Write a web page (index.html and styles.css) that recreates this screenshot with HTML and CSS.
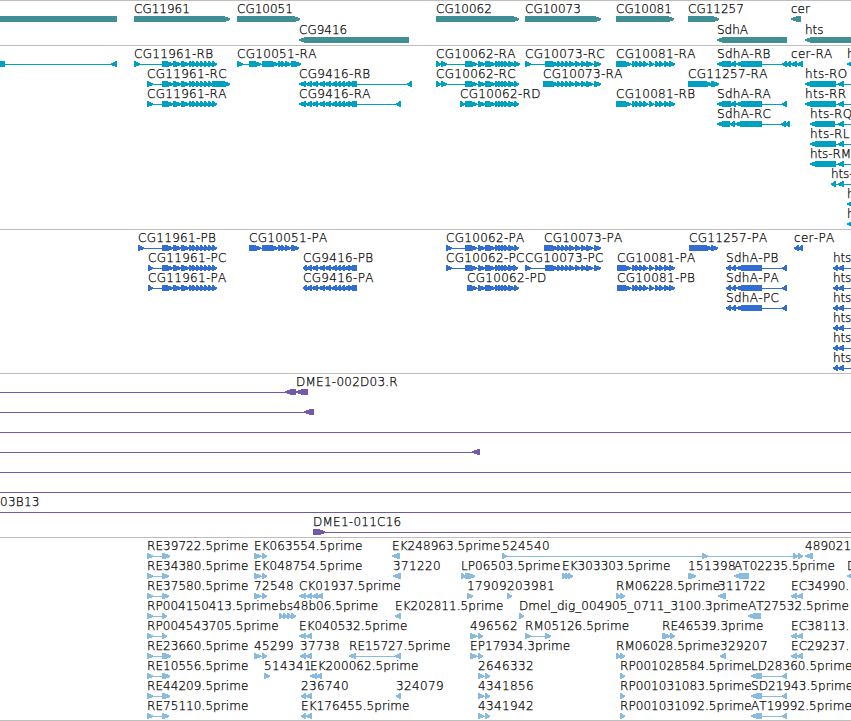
FILE: index.html
```
<!DOCTYPE html>
<html lang="en">
<head>
    <meta charset="UTF-8">
    <title>Genome browser</title>
    <link rel="stylesheet" href="styles.css">
</head>
<body>

    <main class="browser">
        <section class="track"><svg id="genes" class="lane genes" height="44"></svg></section>
        <section class="track"><svg id="transcripts" class="lane transcripts" height="183"></svg></section>
        <section class="track"><svg id="proteins" class="lane proteins" height="143"></svg></section>
        <section class="track"><svg id="bacs" class="lane bacs" height="163"></svg></section>
        <section class="track"><svg id="ests" class="lane ests" height="182"></svg></section>
    </main>

    <script src="tracks.js"></script>

</body>
</html>
```
FILE: styles.css
```
body {
    margin: 0;
    background-color: #fff;
    font-family: "DejaVu Sans Light", "DejaVu Sans", Verdana, sans-serif;
    font-size: 12px;
    font-kerning: none;
}
.browser {
    display: flex;
    flex-direction: column;
    overflow: hidden;
    border-bottom: 1px solid #bebebe;
}
.track {
    border-top: 1px solid #bebebe;
}
.lane {
    display: block;
    width: 100%;
    overflow: hidden;
}
.label {
    fill: #000;
    stroke: #000;
    stroke-width: 0.25px;
}
.label.number {
    letter-spacing: 0.35px;
}
.label.edge {
    letter-spacing: -0.1px;
}
.shape {
    fill: currentColor;
    shape-rendering: crispEdges;
}
.genes {
    color: #408f95;
}
.transcripts {
    color: #00a0c0;
    letter-spacing: 0.3px;
}
.proteins {
    color: #316ed0;
    letter-spacing: 0.3px;
}
.bacs {
    color: #7359a8;
    letter-spacing: 0.25px;
}
.ests {
    color: #88bbdd;
    letter-spacing: 0.06px;
}
```
FILE: tracks.js
```
// [row, strand, label, exons], exons are "start..end" pairs
const e11961 = ' 162..173 173..181 181..189 189..193 192..197 196..201 200..205 204..209 208..213';
const e9416 = ' 306..312 311..318 318..325 324..331 331..337 336..341 340..345 344..350 347..357';
const e10062 = ' 478..485 485..495 495..499 498..502 501..505 504..509 508..515';
const e10073 = ' 557..562 561..566 565..570 569..575 575..581 581..587 586..593 594..601';
const e10081 = ' 632..636 635..640 639..644 643..648 649..654 655..660 659..664 664..670 669..675';

const tracks = {
    genes: [
        [0, '-', '', '-20..117'],
        [0, '+', 'CG11961', '134..230'],
        [0, '+', 'CG10051', '237..300'],
        [1, '-', 'CG9416', '299..409'],
        [0, '+', 'CG10062', '436..519'],
        [0, '+', 'CG10073', '525..601'],
        [0, '+', 'CG10081', '616..674'],
        [0, '+', 'CG11257', '688..719'],
        [1, '-', 'SdhA', '717..787'],
        [0, '-', 'cer', '791..801'],
        [1, '-', 'hts', '805..870']
    ],
    transcripts: [
        [0, '-', '', '-20..5 111..117'],
        [0, '+', 'CG11961-RB', '134..140' + e11961 + ' 212..217'],
        [1, '+', 'CG11961-RC', '147..153' + e11961 + ' 212..230'],
        [2, '+', 'CG11961-RA', '147..153' + e11961 + ' 212..217'],
        [0, '+', 'CG10051-RA', '237..243 249..261 262..278 278..282 281..286 285..291 291..301'],
        [1, '-', 'CG9416-RB', '299..306' + e9416 + ' 407..412'],
        [2, '-', 'CG9416-RA', '299..306' + e9416 + ' 396..401'],
        [0, '+', 'CG10062-RA', '436..441 441..447 465..477' + e10062 + ' 514..520'],
        [1, '+', 'CG10062-RC', '436..441 441..447 465..477' + e10062 + ' 514..519'],
        [2, '+', 'CG10062-RD', '460..465 465..477' + e10062 + ' 514..519'],
        [0, '+', 'CG10073-RC', '525..531 545..558' + e10073],
        [1, '+', 'CG10073-RA', '543..558' + e10073],
        [0, '+', 'CG10081-RA', '616..631' + e10081],
        [2, '+', 'CG10081-RB', '616..620 618..631' + e10081],
        [1, '+', 'CG11257-RA', '688..712 711..719'],
        [0, '-', 'SdhA-RB', '717..731 730..736 736..762 782..787'],
        [2, '-', 'SdhA-RA', '717..731 730..736 736..762 782..787'],
        [3, '-', 'SdhA-RC', '717..730 730..735 735..762 781..786 785..790'],
        [0, '-', '', '786..791'],
        [0, '-', 'cer-RA', '791..797 797..803'],
        [0, '-', 'h', '847..870'],
        [1, '-', 'hts-RO', '805..836 838..844 870..880'],
        [2, '-', 'hts-RR', '805..836 838..844 870..880'],
        [3, '-', 'hts-RQ', '810..835 838..844 870..880'],
        [4, '-', 'hts-RL', '810..836 838..844 870..880'],
        [5, '-', 'hts-RM', '810..836 838..844 870..880'],
        [6, '-', 'hts-', '831..836 838..844 870..880'],
        [7, '-', 'h', '847..870'],
        [8, '-', 'h', '847..870']
    ],
    proteins: [
        [0, '+', 'CG11961-PB', '138..144' + e11961 + ' 212..217'],
        [1, '+', 'CG11961-PC', '148..153' + e11961 + ' 212..217'],
        [2, '+', 'CG11961-PA', '148..153' + e11961 + ' 212..217'],
        [0, '+', 'CG10051-PA', '249..261 262..278 278..282 281..286 285..291 291..299'],
        [1, '-', 'CG9416-PB', '303..307' + e9416],
        [2, '-', 'CG9416-PA', '303..307' + e9416],
        [0, '+', 'CG10062-PA', '446..452 465..477' + e10062 + ' 514..519'],
        [1, '+', 'CG10062-PC', '446..452 465..477' + e10062 + ' 513..518'],
        [2, '+', 'CG10062-PD', '467..477' + e10062 + ' 514..519'],
        [0, '+', 'CG10073-PA', '544..558' + e10073],
        [1, '+', 'CG10073-PC', '525..531 545..558' + e10073],
        [1, '+', 'CG10081-PA', '617..620 618..631' + e10081],
        [2, '+', 'CG10081-PB', '617..620 618..631' + e10081],
        [0, '+', 'CG11257-PA', '689..712 711..718'],
        [1, '-', 'SdhA-PB', '726..731 731..736 736..762 782..787'],
        [2, '-', 'SdhA-PA', '726..731 731..736 736..762 782..787'],
        [3, '-', 'SdhA-PC', '726..731 731..736 736..762 782..787'],
        [0, '-', 'cer-PA', '794..799 798..803'],
        [1, '-', 'hts', '833..838 838..844 870..880'],
        [2, '-', 'hts', '833..838 838..844 870..880'],
        [3, '-', 'hts', '833..838 838..844 870..880'],
        [4, '-', 'hts', '833..838 838..844 870..880'],
        [5, '-', 'hts', '833..838 838..844 870..880'],
        [6, '-', 'hts', '833..838 838..844 870..880']
    ],
    bacs: [
        [0, '-', '', '-20..-10 285..296'],
        [0, '-', 'DME1-002D03.R', '296..308'],
        [1, '-', '', '-20..-10 304..314'],
        [2, '+', '', '-20..-10 870..880'],
        [3, '-', '', '-20..-10 472..480'],
        [4, '+', '', '-20..-10 870..880'],
        [5, '+', '', '-20..-10 870..880'],
        [6, '+', '03B13', '0..0 870..880'],
        [7, '+', 'DME1-011C16', '313..325 870..880']
    ],
    ests: [
        [0, '+', 'RE39722.5prime', '147..153 162..170'],
        [1, '+', 'RE34380.5prime', '147..153 162..169'],
        [2, '+', 'RE37580.5prime', '147..153 162..169'],
        [3, '+', 'RP004150413.5prime', '147..153 162..167'],
        [4, '+', 'RP004543705.5prime', '147..153 162..167'],
        [5, '+', 'RE23660.5prime', '147..153 162..171'],
        [6, '+', 'RE10556.5prime', '147..153 162..170'],
        [7, '+', 'RE44209.5prime', '147..153 162..170'],
        [8, '+', 'RE75110.5prime', '147..153 162..169'],
        [0, '+', 'EK063554.5prime', '254..261 262..267'],
        [1, '+', 'EK048754.5prime', '254..261 262..267'],
        [2, '+', '72548', '254..261 262..267'],
        [5, '+', '45299', '254..261 262..267'],
        [6, '+', '514341', '264..270'],
        [3, '+', 'bs48b06.5prime', '279..284 283..288 287..292 291..296'],
        [2, '-', 'CK01937.5prime', '299..306 306..312 312..318 317..323'],
        [4, '-', 'EK040532.5prime', '299..306 306..312'],
        [5, '-', '37738', '300..306 306..312'],
        [6, '-', 'EK200062.5prime', '310..317 316..322'],
        [7, '-', '236740', '301..306 306..312'],
        [8, '-', 'EK176455.5prime', '301..306 306..312'],
        [5, '-', 'RE15727.5prime', '349..356 395..401'],
        [0, '-', 'EK248963.5prime', '392..400'],
        [1, '-', '371220', '393..401'],
        [3, '-', 'EK202811.5prime', '395..401'],
        [7, '-', '324079', '396..401'],
        [0, '+', '524540', '502..507 702..708 793..798 798..803'],
        [1, '+', 'LP06503.5prime', '461..466 465..475'],
        [2, '+', '17909', '467..473'],
        [2, '+', '203981', '507..512'],
        [3, '+', 'Dmel_dig_004905_0711_3100.3prime', '519..524'],
        [4, '+', '496562', '470..477 478..483'],
        [5, '+', 'EP17934.3prime', '470..477 478..483'],
        [6, '+', '2646332', '478..484 485..490'],
        [7, '+', '4341856', '478..484 485..490'],
        [8, '+', '4341942', '478..484 485..490'],
        [4, '+', 'RM05126.5prime', '525..531 545..551'],
        [1, '+', 'EK303303.5prime', '562..567 565..570 568..573'],
        [2, '+', 'RM06228.5prime', '616..621 620..625'],
        [5, '+', 'RM06028.5prime', '616..621 620..625'],
        [6, '+', 'RP001028584.5prime', '620..625'],
        [7, '+', 'RP001031083.5prime', '620..625'],
        [8, '+', 'RP001031092.5prime', '620..625'],
        [4, '+', 'RE46539.3prime', '662..670 670..675'],
        [1, '+', '151398', '688..696'],
        [2, '-', '311722', '718..726'],
        [5, '-', '329207', '720..726'],
        [1, '-', 'AT02235.5prime', '734..749'],
        [3, '-', 'AT27532.5prime', '748..761'],
        [6, '-', 'LD28360.5prime', '751..762 782..787'],
        [7, '-', 'SD21943.5prime', '751..762 782..787'],
        [8, '-', 'AT19992.5prime', '751..762 782..787'],
        [2, '-', 'EC34990.', '791..797 797..803'],
        [4, '-', 'EC38113.', '791..797 797..803'],
        [5, '-', 'EC29237.', '791..797 797..803'],
        [0, '-', '489021', '805..813'],
        [1, '-', 'D', '847..870']
    ]
};

const HEAD = 6;

function add(parent, name, attrs) {
    const el = document.createElementNS('http://www.w3.org/2000/svg', name);
    for (const key in attrs) el.setAttribute(key, attrs[key]);
    parent.appendChild(el);
    return el;
}

// a box that ends in an arrow head on the side the strand runs to
function exonPoints(start, end, y, strand) {
    const head = Math.min(HEAD, end - start - 1);
    if (strand === '+') {
        return [[start, y], [end - head, y], [end, y + 2.5], [end, y + 4], [end - head, y + 6], [start, y + 6]];
    }
    return [[end, y], [start + head, y], [start, y + 2.5], [start, y + 4], [start + head, y + 6], [end, y + 6]];
}

function labelClass(label, x) {
    if (/^\d+$/.test(label) && x < 800) return 'label number';
    if (x > 825 || label === 'hts-RM') return 'label edge';
    return 'label';
}

for (const id in tracks) {
    const svg = document.getElementById(id);
    const pitch = id === 'genes' ? 21 : 20;

    for (const [row, strand, label, exons] of tracks[id]) {
        const y = row * pitch + 15;
        const parts = exons.split(' ').map(part => part.split('..').map(Number));
        const start = parts[0][0];
        const end = parts[parts.length - 1][1];

        if (parts.length > 1) {
            add(svg, 'rect', { class: 'shape', x: start, y: y + 3, width: end - start, height: 1 });
        }
        for (const [from, to] of parts) {
            if (to > from) {
                add(svg, 'polygon', { class: 'shape', points: exonPoints(from, to, y, strand).join(' ') });
            }
        }
        if (label) {
            add(svg, 'text', { class: labelClass(label, start), x: start, y: y - 3 }).textContent = label;
        }
    }
}
```
